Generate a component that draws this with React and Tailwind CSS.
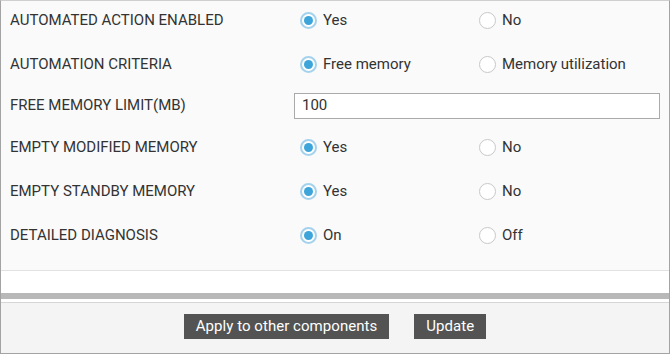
import React from "react";

function Radio({ checked, label }) {
  return (
    <div className="flex items-center gap-[6px]">
      {checked ? (
        <div className="w-[17px] h-[17px] rounded-full border-2 border-[#a4d2ec] bg-white flex items-center justify-center">
          <div className="w-[9px] h-[9px] rounded-full bg-[#3da5da]" />
        </div>
      ) : (
        <div className="w-[17px] h-[17px] rounded-full border border-[#c8c8c8] bg-white" />
      )}
      <span className="text-[15px] text-[#333]">{label}</span>
    </div>
  );
}

function RadioRow({ label, a, b, h }) {
  return (
    <div className={`flex items-center ${h}`}>
      <div className="w-[293px] pl-[9px] text-[15px] text-[#333]">{label}</div>
      <div className="w-[185px] pl-[6px]">
        <Radio checked label={a} />
      </div>
      <div>
        <Radio checked={false} label={b} />
      </div>
    </div>
  );
}

export default function App() {
  return (
    <div
      className="w-[670px] h-[354px] border border-[#a3a3a3] border-t-[#cfcfcf] bg-[#fafafa] flex flex-col"
      style={{ fontFamily: "Roboto, 'Liberation Sans', sans-serif" }}
    >
      <div className="h-[269px] flex flex-col">
        <div className="h-[41px] pb-[3px] flex flex-col justify-center">
          <RadioRow label="AUTOMATED ACTION ENABLED" a="Yes" b="No" h="h-[38px]" />
        </div>
        <RadioRow label="AUTOMATION CRITERIA" a="Free memory" b="Memory utilization" h="h-[44px]" />
        <div className="flex items-center h-[39px]">
          <div className="w-[293px] pl-[9px] text-[15px] text-[#333]">FREE MEMORY LIMIT(MB)</div>
          <div className="w-[366px] h-[26px] border border-[#aaaaaa] bg-white flex items-center px-[7px] text-[15px] text-[#333]">
            100
          </div>
        </div>
        <RadioRow label="EMPTY MODIFIED MEMORY" a="Yes" b="No" h="h-[44px]" />
        <RadioRow label="EMPTY STANDBY MEMORY" a="Yes" b="No" h="h-[44px]" />
        <RadioRow label="DETAILED DIAGNOSIS" a="On" b="Off" h="h-[44px]" />
      </div>
      <div className="h-[23px] border-t border-[#e2e2e2] bg-white" />
      <div className="h-[6px] bg-[#b8b8b8]" />
      <div className="h-[3px] bg-white" />
      <div className="flex-1 border-t border-[#d6d6d6] bg-[#f4f4f4] flex justify-center items-start pt-[11px] gap-[25px]">
        <button className="h-[25px] px-[12px] bg-[#535353] text-white text-[15px] tracking-[0.05px]">
          Apply to other components
        </button>
        <button className="h-[25px] px-[12px] bg-[#535353] text-white text-[15px] tracking-[0.05px]">
          Update
        </button>
      </div>
    </div>
  );
}
